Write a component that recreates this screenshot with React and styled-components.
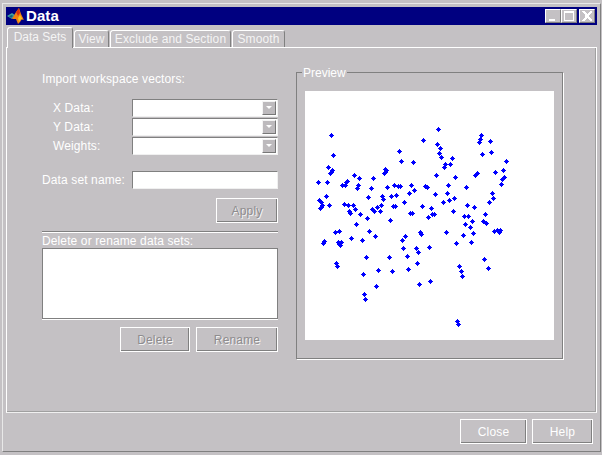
import styled, { createGlobalStyle } from 'styled-components';

const GlobalStyle = createGlobalStyle`
	* {
		box-sizing: border-box;
	}
	html,
	body {
		margin: 0;
		width: 602px;
		height: 455px;
		overflow: hidden;
		background: #c4c1c4;
		font-family: 'Liberation Sans', Arial, sans-serif;
		font-size: 12px;
		color: #fff;
	}
`;

const points = [
	[331, 135], [423, 140], [399, 151], [333, 155], [401, 161], [413, 162], [328, 167], [385, 169],
	[386, 170], [332, 170], [331, 172], [330, 173], [385, 172], [384, 173], [354, 175], [359, 178],
	[373, 178], [347, 181], [346, 182], [318, 182], [327, 182], [342, 185], [345, 185], [358, 185],
	[357, 188], [371, 188], [387, 187], [394, 185], [398, 186], [400, 186], [411, 185], [425, 186],
	[427, 187], [414, 190], [409, 193], [326, 196], [368, 197], [382, 196], [383, 199], [391, 196],
	[396, 195], [319, 200], [321, 202], [322, 205], [321, 207], [320, 208], [329, 205], [344, 204],
	[348, 205], [353, 205], [404, 202], [381, 205], [377, 207], [393, 206], [395, 206], [422, 206],
	[355, 209], [349, 211], [350, 213], [372, 209], [374, 211], [380, 211], [410, 213], [412, 213],
	[360, 214], [367, 218], [390, 220], [428, 217], [356, 224], [438, 129], [481, 135], [480, 139],
	[479, 142], [490, 141], [437, 144], [440, 148], [439, 153], [441, 157], [482, 154], [491, 152],
	[452, 158], [506, 161], [445, 164], [450, 164], [444, 167], [503, 170], [495, 172], [477, 173],
	[475, 175], [436, 175], [455, 177], [504, 177], [502, 179], [501, 184], [448, 185], [466, 187],
	[492, 193], [435, 194], [447, 193], [454, 198], [493, 198], [449, 200], [443, 202], [489, 202],
	[467, 205], [474, 207], [431, 208], [453, 211], [485, 214], [432, 214], [434, 214], [464, 216],
	[468, 216], [472, 221], [483, 221], [486, 223], [465, 224], [335, 232], [339, 231], [369, 231],
	[375, 236], [351, 238], [362, 240], [405, 236], [402, 240], [420, 232], [421, 234], [324, 241],
	[323, 243], [338, 242], [341, 242], [339, 244], [340, 245], [403, 248], [416, 248], [418, 252],
	[429, 247], [366, 257], [389, 257], [407, 256], [336, 263], [337, 266], [417, 263], [378, 270],
	[392, 271], [408, 269], [363, 274], [376, 286], [419, 284], [430, 281], [364, 294], [365, 299],
	[470, 227], [446, 232], [463, 235], [473, 233], [494, 231], [497, 230], [500, 230], [499, 232],
	[456, 243], [471, 242], [484, 259], [488, 268], [459, 266], [461, 271], [462, 276], [457, 321],
	[458, 324],
];

const tabs = [
	{ label: 'Data Sets', width: 66, active: true },
	{ label: 'View', width: 35 },
	{ label: 'Exclude and Section', width: 121 },
	{ label: 'Smooth', width: 53 },
];

const vectorRows = ['X Data:', 'Y Data:', 'Weights:'];

const MatlabLogo = () => (
	<svg width='17' height='16' viewBox='0 0 17 16'>
		<path d='M0 8l5-3 3 2-3 4z' fill='#3f9f9f' />
		<path d='M2 8l3-1 1 1-2 2z' fill='#0f5f7f' />
		<path d='M5 11l4-7 3-4 2 6 3 6-2-1-2 3-2 2-2-5z' fill='#f08010' />
		<path d='M9 4l3-4 1 5-2 3z' fill='#d83010' />
		<path d='M11 10l2-3 3 5-2-1-2 3z' fill='#f8c020' />
	</svg>
);

const Plot = () => (
	<PlotArea width='249' height='249' viewBox='305 91 249 249' shapeRendering='crispEdges'>
		{points.map(([x, y]) => (
			<path
				key={`${x}-${y}`}
				d={`M${x} ${y - 2}h1v1h1v1h1v1h-1v1h-1v1h-1v-1h-1v-1h-1v-1h1v-1h1z`}
				fill='#0000ff'
			/>
		))}
	</PlotArea>
);

const App = () => {
	return (
		<Window>
			<GlobalStyle />
			<TitleBar>
				<MatlabLogo />
				<TitleText>Data</TitleText>
				<WindowButtons>
					<WindowButton>
						<MinGlyph />
					</WindowButton>
					<WindowButton>
						<MaxGlyph />
					</WindowButton>
					<CloseWindowButton>
						<svg width='12' height='10' viewBox='0 0 12 10' shapeRendering='crispEdges'>
							<path d='M1 0h2l3 3 3-3h2v1l-3 3v2l3 3v1h-2l-3-3-3 3h-2v-1l3-3v-2l-3-3z' fill='#fff' />
						</svg>
					</CloseWindowButton>
				</WindowButtons>
			</TitleBar>

			<TabStrip>
				{tabs.map((tab) => (
					<Tab key={tab.label} $active={tab.active} $width={tab.width}>
						{tab.label}
					</Tab>
				))}
			</TabStrip>

			<Panel>
				<LeftColumn>
					<ImportLabel>Import workspace vectors:</ImportLabel>
					<VectorRows>
						{vectorRows.map((label) => (
							<FieldRow key={label}>
								<VectorLabel>{label}</VectorLabel>
								<ComboBox>
									<ComboArrow />
								</ComboBox>
							</FieldRow>
						))}
					</VectorRows>
					<NameRow>
						<NameLabel>Data set name:</NameLabel>
						<TextField />
					</NameRow>
					<ApplyRow>
						<DisabledButton $width={62}>Apply</DisabledButton>
					</ApplyRow>
					<Separator />
					<ListLabel>Delete or rename data sets:</ListLabel>
					<ListBox />
					<ActionRow>
						<DisabledButton $width={70}>Delete</DisabledButton>
						<DisabledButton $width={82}>Rename</DisabledButton>
					</ActionRow>
				</LeftColumn>

				<PreviewGroup>
					<PreviewLegend>Preview</PreviewLegend>
					<Plot />
				</PreviewGroup>
			</Panel>

			<Footer>
				<FooterButton $width={67}>Close</FooterButton>
				<FooterButton $width={61}>Help</FooterButton>
			</Footer>
		</Window>
	);
};

export default App;

const Window = styled.div`
	display: flex;
	flex-direction: column;
	width: 599px;
	height: 449px;
	margin: 3px 0 0 2px;
	padding: 3px 3px 0 3px;
	background: #c4c1c4;
	border-style: solid;
	border-width: 1px;
	border-color: #e8e8e8 #808080 #808080 #e8e8e8;
`;

const TitleBar = styled.div`
	display: flex;
	align-items: center;
	flex: none;
	height: 18px;
	padding: 0 1px 0 1px;
	background: #000080;
`;

const TitleText = styled.span`
	margin-left: 2px;
	font-size: 15px;
	font-weight: 700;
	line-height: 18px;
	letter-spacing: 0.1px;
`;

const WindowButtons = styled.div`
	display: flex;
	margin-left: auto;
	padding-right: 1px;
`;

const WindowButton = styled.div`
	display: flex;
	position: relative;
	align-items: center;
	justify-content: center;
	width: 16px;
	height: 14px;
	background: #c4c1c4;
	border-style: solid;
	border-width: 1px;
	border-color: #fff #808080 #808080 #fff;
`;

const CloseWindowButton = styled(WindowButton)`
	margin-left: 2px;
`;

const MinGlyph = styled.span`
	position: absolute;
	left: 3px;
	bottom: 1px;
	width: 6px;
	height: 2px;
	background: #fff;
`;

const MaxGlyph = styled.span`
	width: 10px;
	height: 10px;
	border: 1px solid #fff;
	border-top-width: 2px;
`;

const TabStrip = styled.div`
	display: flex;
	align-items: flex-end;
	gap: 1px;
	flex: none;
	height: 22px;
	padding-left: 1px;
	position: relative;
	z-index: 1;
`;

const Tab = styled.div`
	display: flex;
	align-items: center;
	justify-content: center;
	width: ${(props) => props.$width}px;
	height: ${(props) => (props.$active ? '21px' : '17px')};
	margin-bottom: ${(props) => (props.$active ? '-1px' : '0')};
	padding-bottom: ${(props) => (props.$active ? '3px' : '0')};
	background: #c4c1c4;
	border-style: solid;
	border-color: #fff #808080 transparent #fff;
	border-width: 1px 1px 0 1px;
	border-radius: 3px 3px 0 0;
	color: #f4f4f4;
	white-space: nowrap;
	letter-spacing: ${(props) => (props.$active ? '0' : '0.1px')};
`;

const Panel = styled.div`
	display: flex;
	flex: none;
	height: 366px;
	padding: 24px 33px 0 35px;
	border: 1px solid #fff;
	border-bottom-color: #f0f0f0;
	box-shadow: inset -1px -1px 0 #a0a0a0;
`;

const LeftColumn = styled.div`
	display: flex;
	flex-direction: column;
	width: 236px;
	flex: none;
`;

const Label = styled.span`
	line-height: 14px;
	letter-spacing: 0.12px;
	white-space: nowrap;
`;

const ImportLabel = styled(Label)`
	display: block;
	height: 14px;
`;

const VectorRows = styled.div`
	display: flex;
	flex-direction: column;
	gap: 1px;
	margin-top: 13px;
`;

const FieldRow = styled.div`
	display: flex;
	align-items: center;
	height: 18px;
`;

const VectorLabel = styled(Label)`
	width: 90px;
	padding-left: 11px;
`;

const ComboBox = styled.div`
	display: flex;
	align-items: center;
	justify-content: flex-end;
	flex: 1;
	height: 18px;
	padding-right: 1px;
	background: #fff;
	border-style: solid;
	border-width: 1px;
	border-color: #808080 #f0f0f0 #f0f0f0 #808080;
`;

const ComboArrow = styled.span`
	display: block;
	position: relative;
	width: 14px;
	height: 14px;
	background: #bdbabd;
	border-style: solid;
	border-width: 1px;
	border-color: #f4f4f4 #777 #777 #f4f4f4;

	&::after {
		content: '';
		position: absolute;
		left: 3px;
		top: 4px;
		border-style: solid;
		border-width: 3px 3px 0 3px;
		border-color: #fff transparent transparent transparent;
	}
`;

const NameRow = styled(FieldRow)`
	margin-top: 16px;
`;

const NameLabel = styled(Label)`
	width: 90px;
`;

const TextField = styled.div`
	flex: 1;
	height: 18px;
	background: #fff;
	border-style: solid;
	border-width: 1px;
	border-color: #808080 #f0f0f0 #f0f0f0 #808080;
`;

const ApplyRow = styled.div`
	display: flex;
	justify-content: flex-end;
	margin-top: 9px;
`;

const DisabledButton = styled.div`
	display: flex;
	align-items: center;
	justify-content: center;
	width: ${(props) => props.$width}px;
	height: 25px;
	border: 1px solid #fff;
	box-shadow: inset -1px -1px 0 #808080;
	color: #8e8c8e;
	text-shadow: 1px 1px 0 #f4f4f4;
	letter-spacing: 0.15px;
`;

const Separator = styled.div`
	height: 2px;
	margin-top: 8px;
	background: #808080;
	border-bottom: 1px solid #fff;
`;

const ListLabel = styled(Label)`
	display: block;
	height: 14px;
	margin-top: 1px;
`;

const ListBox = styled.div`
	height: 71px;
	background: #fff;
	border-style: solid;
	border-width: 1px;
	border-color: #808080;
	box-shadow: 0 1px 0 #fff;
`;

const ActionRow = styled.div`
	display: flex;
	justify-content: flex-end;
	gap: 6px;
	margin-top: 8px;
`;

const PreviewGroup = styled.div`
	position: relative;
	width: 267px;
	height: 287px;
	margin-left: 18px;
	padding: 18px 0 0 8px;
	border-style: solid;
	border-width: 1px;
	border-color: #808080;
	box-shadow: 1px 1px 0 #fff;
`;

const PreviewLegend = styled.span`
	position: absolute;
	top: -7px;
	left: 5px;
	padding: 0 1px;
	background: #c4c1c4;
	line-height: 14px;
`;

const PlotArea = styled.svg`
	display: block;
	background: #fff;
`;

const Footer = styled.div`
	display: flex;
	justify-content: flex-end;
	gap: 5px;
	padding: 6px 4px 0 0;
`;

const FooterButton = styled.div`
	display: flex;
	align-items: center;
	justify-content: center;
	width: ${(props) => props.$width}px;
	height: 25px;
	border: 1px solid #fff;
	box-shadow: inset -1px -1px 0 #808080;
	letter-spacing: 0.2px;
`;
